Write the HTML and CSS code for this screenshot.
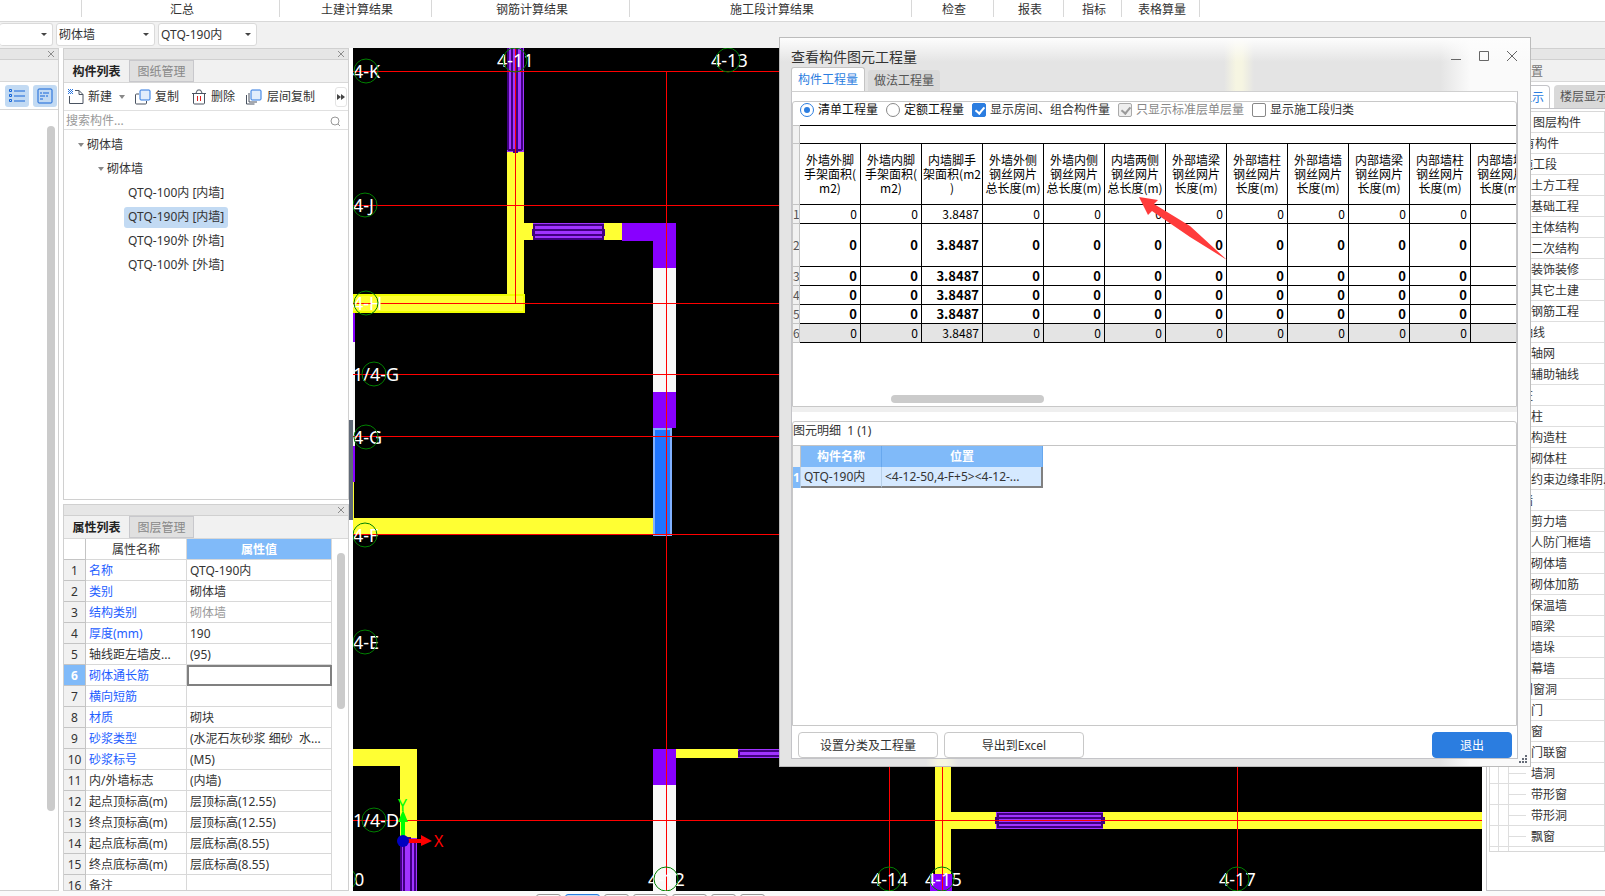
FILE: index.html
```html
<!DOCTYPE html>
<html lang="zh-CN">
<head>
    <meta charset="UTF-8">
    <meta name="viewport" content="width=device-width, initial-scale=1.0">
    <title>查看构件图元工程量</title>
    <link rel="stylesheet" href="styles.css">
</head>
<body>

<nav class="ribbon">
    <span class="group first"></span>
    <span class="group summary">汇总</span>
    <span class="group civil">土建计算结果</span>
    <span class="group rebar">钢筋计算结果</span>
    <span class="group stage">施工段计算结果</span>
    <span class="group check">检查</span>
    <span class="group report">报表</span>
    <span class="group index">指标</span>
    <span class="group takeoff">表格算量</span>
</nav>

<div class="selectbar">
    <div class="combo short"><select aria-label="楼层"><option></option></select></div>
    <div class="combo"><select aria-label="构件类型"><option>砌体墙</option></select></div>
    <div class="combo"><select aria-label="构件"><option>QTQ-190内</option></select></div>
</div>

<main class="workspace">

    <!-- Navigation dock -->
    <aside class="nav-dock">
        <div class="dock-title"><button class="dock-close" aria-label="关闭">
            <svg width="8" height="8" viewBox="0 0 8 8"><path d="M1 1l6 6M7 1l-6 6"/></svg></button></div>
        <div class="nav-blank"></div>
        <div class="nav-tools">
            <button aria-label="列表">
                <svg width="16" height="14" viewBox="0 0 16 14"><path d="M5 2h11M5 7h11M5 12h11"/><path d="M.5 .5h2v2h-2zM.5 5.5h2v2h-2zM.5 10.500h2v2h-2z"/></svg>
            </button>
            <button aria-label="详情">
                <svg width="16" height="16" viewBox="0 0 16 16"><rect x="1" y="1" width="14" height="14" rx="1"/><path d="M3 5h2M6 5h6M3 8h5M9 8h2M3 11h3"/></svg>
            </button>
        </div>
        <div class="nav-body"><div class="scroll-thumb"></div></div>
    </aside>

    <div class="left-docks">
        <!-- Component list -->
        <section class="panel list-panel">
            <div class="dock-title"><button class="dock-close" aria-label="关闭">
                <svg width="8" height="8" viewBox="0 0 8 8"><path d="M1 1l6 6M7 1l-6 6"/></svg></button></div>
            <div class="tabs">
                <button class="tab active">构件列表</button>
                <button class="tab">图纸管理</button>
            </div>
            <div class="tools">
                <button class="tool new">
                    <svg width="16" height="16" viewBox="0 0 16 16"><path class="ink" d="M7 1.500h4l4 4v9H1.500V7M11 1.500v4h4"/><path class="dots" d="M0 0h1v1H0zM2 0h1v1H2zM4 0h1v1H4zM1 1h1v1H1zM3 1h1v1H3zM0 2h1v1H0zM2 2h1v1H2zM4 2h1v1H4zM1 3h1v1H1zM3 3h1v1H3zM0 4h1v1H0zM2 4h1v1H2zM4 4h1v1H4z"/></svg>
                    新建<i class="caret"></i></button>
                <button class="tool copy">
                    <svg width="16" height="16" viewBox="0 0 16 16"><path class="ink" d="M4 5H1.500a1 1 0 0 0-1 1v8a1 1 0 0 0 1 1h9a1 1 0 0 0 1-1v-2"/><rect class="sheet" x="5" y="1" width="10" height="10" rx="1"/></svg>
                    复制</button>
                <button class="tool delete">
                    <svg width="14" height="16" viewBox="0 0 14 16"><path class="ink" d="M0 4.500h14M4 4L5.500 1h3L10 4M1.500 5v9a1 1 0 0 0 1 1h9a1 1 0 0 0 1-1V5"/><path class="warn" d="M5.500 7v5M8.500 7v5"/></svg>
                    删除</button>
                <button class="tool floor">
                    <svg width="16" height="16" viewBox="0 0 16 16"><path class="ink" d="M3 4v9h8M.5 6v9h8"/><rect class="sheet" x="5" y="1" width="10" height="10" rx="1"/></svg>
                    层间复制</button>
                <button class="more" aria-label="更多"><i></i><i></i></button>
            </div>
            <div class="search">
                <input type="text" placeholder="搜索构件..." aria-label="搜索构件">
                <svg width="12" height="12" viewBox="0 0 12 12"><circle cx="5" cy="6" r="4"/><path d="M8 9l2 2"/></svg>
            </div>
            <ul class="tree">
                <li class="lv1"><i class="caret"></i>砌体墙</li>
                <li class="lv2"><i class="caret"></i>砌体墙</li>
                <li class="lv3"><span>QTQ-100内 [内墙]</span></li>
                <li class="lv3"><span class="picked">QTQ-190内 [内墙]</span></li>
                <li class="lv3"><span>QTQ-190外 [外墙]</span></li>
                <li class="lv3"><span>QTQ-100外 [外墙]</span></li>
            </ul>
        </section>

        <!-- Property list -->
        <section class="panel props-panel">
            <div class="dock-title"><button class="dock-close" aria-label="关闭">
                <svg width="8" height="8" viewBox="0 0 8 8"><path d="M1 1l6 6M7 1l-6 6"/></svg></button></div>
            <div class="tabs">
                <button class="tab active">属性列表</button>
                <button class="tab">图层管理</button>
            </div>
            <div class="props-body">
                <table class="props">
                    <tr><th class="num"></th><th class="key">属性名称</th><th class="val-head">属性值</th></tr>
                    <tr><td class="num">1</td><td class="blue">名称</td><td>QTQ-190内</td></tr>
                    <tr><td class="num">2</td><td class="blue">类别</td><td>砌体墙</td></tr>
                    <tr><td class="num">3</td><td class="blue">结构类别</td><td class="gray">砌体墙</td></tr>
                    <tr><td class="num">4</td><td class="blue">厚度(mm)</td><td>190</td></tr>
                    <tr><td class="num">5</td><td>轴线距左墙皮...</td><td>(95)</td></tr>
                    <tr><td class="num current">6</td><td class="blue">砌体通长筋</td><td class="editing"><input type="text" aria-label="砌体通长筋"></td></tr>
                    <tr><td class="num">7</td><td class="blue">横向短筋</td><td></td></tr>
                    <tr><td class="num">8</td><td class="blue">材质</td><td>砌块</td></tr>
                    <tr><td class="num">9</td><td class="blue">砂浆类型</td><td>(水泥石灰砂浆 细砂&nbsp; 水...</td></tr>
                    <tr><td class="num">10</td><td class="blue">砂浆标号</td><td>(M5)</td></tr>
                    <tr><td class="num">11</td><td>内/外墙标志</td><td>(内墙)</td></tr>
                    <tr><td class="num">12</td><td>起点顶标高(m)</td><td>层顶标高(12.55)</td></tr>
                    <tr><td class="num">13</td><td>终点顶标高(m)</td><td>层顶标高(12.55)</td></tr>
                    <tr><td class="num">14</td><td>起点底标高(m)</td><td>层底标高(8.55)</td></tr>
                    <tr><td class="num">15</td><td>终点底标高(m)</td><td>层底标高(8.55)</td></tr>
                    <tr><td class="num">16</td><td>备注</td><td></td></tr>
                </table>
                <div class="scroll-thumb"></div>
            </div>
        </section>
    </div>

    <div class="splitter"><button class="handle" aria-label="收起"></button></div>

    <!-- Drawing area -->
    <div class="canvas">
        <svg viewBox="353 48 1129 843" preserveAspectRatio="xMinYMin slice">
            <!-- edge of the neighbouring rooms -->
            <path class="column" d="M353 296h2v46h-2zM353 446h2v36h-2z"/>
            <path class="shaft" d="M353 342h2v104h-2z"/>
            <!-- walls -->
            <g class="wall">
                <path d="M507 152h17v142h-17z"/>
                <path d="M524 223h98v17h-98z"/>
                <path d="M353 518h300v16H353z"/>
                <path d="M353 482h1v36h-1z"/>
                <path d="M353 749h64v89h-17v-72h-47z"/>
                <path d="M676 749h62v9h-62z"/>
                <path d="M935 760h16v114h-16z"/>
                <path d="M951 812h531v17H951z"/>
                <rect class="wall-edge" x="350" y="295" width="174" height="17"/>
            </g>
            <!-- windows -->
            <g class="window">
                <rect x="507" y="40" width="17" height="112"/>
                <rect x="533" y="223" width="71" height="17"/>
                <rect x="400" y="838" width="17" height="60"/>
                <rect x="738" y="749" width="60" height="9"/>
                <rect x="996" y="812" width="107" height="17"/>
            </g>
            <g class="window-bars">
                <path d="M508 48v102M512 48v102M517 48v102M522 48v102M508 150h14M513 152h5"/>
                <path d="M534 225h69v14h-69zM534 230h69M534 235h69M533 229v7M604 229v7"/>
                <path d="M401 840v52M404 840v52M411 840v52M415 840v52M401 838h10"/>
                <path d="M739 751h50M739 756h50M739 751v6"/>
                <path d="M998 814h104v13H998zM998 818h104M998 823h104M996 817v7M1104 817v7"/>
            </g>
            <!-- columns and shear walls -->
            <g class="column">
                <path d="M622 223h54v45h-23v-27h-31z"/>
                <path d="M653 392h23v36h-23z"/>
                <path d="M653 749h23v36h-23z"/>
                <path d="M930 874h22v17h-22z"/>
            </g>
            <path class="shaft" d="M653 268h23v124h-23zM653 785h23v106h-23z"/>
            <rect class="selected" x="654" y="429" width="17" height="106"/>
            <!-- grid -->
            <path class="grid" d="M353 71.500h1129M353 205.500h1129M353 303.500h1129M353 374.500h1129M353 436.500h1129M353 534.500h1129M353 820.500h1129M515.500 48v255M666.500 71v820M889.500 700v191M942.500 700v191M1237.500 700v191"/>
            <!-- axis bubbles -->
            <g class="labels">
                <text x="353" y="78">4-K</text>
                <text x="353" y="212">4-J</text>
                <text x="353" y="310">4-H</text>
                <text x="353" y="381">1/4-G</text>
                <text x="353" y="444">4-G</text>
                <text x="353" y="542">4-F</text>
                <text x="353" y="649">4-E</text>
                <text x="353" y="827">1/4-D</text>
                <text x="354" y="886">0</text>
                <text x="497" y="67">4-11</text>
                <text x="711" y="67">4-13</text>
                <text x="648" y="886">4-12</text>
                <text x="871" y="886">4-14</text>
                <text x="925" y="886">4-15</text>
                <text x="1219" y="886">4-17</text>
            </g>
            <g class="bubbles">
                <circle cx="366" cy="71" r="12"/>
                <circle cx="365" cy="205" r="12"/>
                <circle cx="366" cy="303" r="12"/>
                <circle cx="374" cy="374" r="12"/>
                <circle cx="366" cy="437" r="12"/>
                <circle cx="365" cy="535" r="12"/>
                <circle cx="365" cy="642" r="12"/>
                <circle cx="374" cy="820" r="12"/>
                <circle cx="344" cy="879" r="12"/>
                <circle cx="515" cy="60" r="12"/>
                <circle cx="728" cy="60" r="12"/>
                <circle cx="666" cy="879" r="12"/>
                <circle cx="889" cy="879" r="12"/>
                <circle cx="942" cy="879" r="12"/>
                <circle cx="1237" cy="879" r="12"/>
            </g>
            <!-- coordinate marker -->
            <path class="axis-y" d="M401 838v-16h-3l5-12 5 12h-3v16z"/>
            <path class="axis-x" d="M408 839h13v-4l11 6-11 5v-3h-13z"/>
            <circle class="origin" cx="403" cy="841" r="6"/>
            <text class="y-name" x="398" y="811">Y</text>
            <text class="x-name" x="434" y="847">X</text>
        </svg>
    </div>

    <!-- Display settings dock -->
    <aside class="display-dock">
        <div class="dock-title"></div>
        <div class="display-name">显示设置</div>
        <div class="display-tabs">
            <button class="active">图元显示</button>
            <button>楼层显示</button>
        </div>
        <ul class="layers">
            <li class="head">图层构件</li>
            <li class="l0">所有构件</li>
            <li class="l1">施工段</li>
            <li>土方工程</li>
            <li>基础工程</li>
            <li>主体结构</li>
            <li>二次结构</li>
            <li>装饰装修</li>
            <li>其它土建</li>
            <li>钢筋工程</li>
            <li class="l1">轴线</li>
            <li>轴网</li>
            <li>辅助轴线</li>
            <li class="l1">柱</li>
            <li>柱</li>
            <li>构造柱</li>
            <li>砌体柱</li>
            <li>约束边缘非阴...</li>
            <li class="l1">墙</li>
            <li>剪力墙</li>
            <li>人防门框墙</li>
            <li>砌体墙</li>
            <li>砌体加筋</li>
            <li>保温墙</li>
            <li>暗梁</li>
            <li>墙垛</li>
            <li>幕墙</li>
            <li class="l1">门窗洞</li>
            <li>门</li>
            <li>窗</li>
            <li>门联窗</li>
            <li>墙洞</li>
            <li>带形窗</li>
            <li>带形洞</li>
            <li>飘窗</li>
        </ul>
    </aside>
</main>

<footer class="statusbar">
    <button aria-label="捕捉"></button>
    <button class="wide on" aria-label="正交"></button>
    <button aria-label="交点"></button>
    <button class="wide" aria-label="垂点"></button>
    <button class="wide" aria-label="中点"></button>
    <button aria-label="顶点"></button>
    <button aria-label="坐标"></button>
</footer>

<!-- Quantity dialog -->
<div class="dialog" role="dialog" aria-labelledby="dialogTitle">
    <header class="dialog-head">
        <h1 id="dialogTitle">查看构件图元工程量</h1>
        <div class="win-buttons">
            <button aria-label="最小化"><svg width="12" height="12" viewBox="0 0 12 12"><path d="M1 9.500h10"/></svg></button>
            <button aria-label="最大化"><svg width="12" height="12" viewBox="0 0 12 12"><path d="M1.500 1.500h9v9h-9z"/></svg></button>
            <button aria-label="关闭"><svg width="12" height="12" viewBox="0 0 12 12"><path d="M1 1l10 10M11 1L1 11"/></svg></button>
        </div>
    </header>
    <div class="dialog-tabs">
        <button class="active">构件工程量</button>
        <button>做法工程量</button>
    </div>
    <div class="dialog-page">
        <section class="quantities">
            <div class="options">
                <label><input type="radio" name="mode" checked>清单工程量</label>
                <label><input type="radio" name="mode">定额工程量</label>
                <label class="dim-text"><input type="checkbox" checked>显示房间、组合构件量</label>
                <label class="disabled"><input type="checkbox" checked disabled>只显示标准层单层量</label>
                <label class="dim-text"><input type="checkbox">显示施工段归类</label>
            </div>
            <div class="table-view">
                <table class="qty">
                    <colgroup><col class="no-col"><col span="12"></colgroup>
                    <tr class="band"><th class="no"></th><th colspan="12"></th></tr>
                    <tr class="names"><th class="no"></th><th>外墙外脚<br>手架面积(<br>m2)</th><th>外墙内脚<br>手架面积(<br>m2)</th><th>内墙脚手<br>架面积(m2<br>)</th><th>外墙外侧<br>钢丝网片<br>总长度(m)</th><th>外墙内侧<br>钢丝网片<br>总长度(m)</th><th>内墙两侧<br>钢丝网片<br>总长度(m)</th><th>外部墙梁<br>钢丝网片<br>长度(m)</th><th>外部墙柱<br>钢丝网片<br>长度(m)</th><th>外部墙墙<br>钢丝网片<br>长度(m)</th><th>内部墙梁<br>钢丝网片<br>长度(m)</th><th>内部墙柱<br>钢丝网片<br>长度(m)</th><th>内部墙墙<br>钢丝网片<br>长度(m)</th></tr>
                    <tr><td class="no">1</td><td>0</td><td>0</td><td>3.8487</td><td>0</td><td>0</td><td>0</td><td>0</td><td>0</td><td>0</td><td>0</td><td>0</td><td></td></tr>
                    <tr class="sum tall"><td class="no">2</td><td>0</td><td>0</td><td>3.8487</td><td>0</td><td>0</td><td>0</td><td>0</td><td>0</td><td>0</td><td>0</td><td>0</td><td></td></tr>
                    <tr class="sum"><td class="no">3</td><td>0</td><td>0</td><td>3.8487</td><td>0</td><td>0</td><td>0</td><td>0</td><td>0</td><td>0</td><td>0</td><td>0</td><td></td></tr>
                    <tr class="sum"><td class="no">4</td><td>0</td><td>0</td><td>3.8487</td><td>0</td><td>0</td><td>0</td><td>0</td><td>0</td><td>0</td><td>0</td><td>0</td><td></td></tr>
                    <tr class="sum"><td class="no">5</td><td>0</td><td>0</td><td>3.8487</td><td>0</td><td>0</td><td>0</td><td>0</td><td>0</td><td>0</td><td>0</td><td>0</td><td></td></tr>
                    <tr class="total"><td class="no">6</td><td>0</td><td>0</td><td>3.8487</td><td>0</td><td>0</td><td>0</td><td>0</td><td>0</td><td>0</td><td>0</td><td>0</td><td></td></tr>
                </table>
            </div>
            <div class="scroll-thumb"></div>
        </section>
        <div class="split-line"></div>
        <section class="details">
            <h2>图元明细&nbsp; 1 (1)</h2>
            <div class="detail-view">
                <table class="detail">
                    <tr><th class="no"></th><th class="name">构件名称</th><th class="place">位置</th></tr>
                    <tr><td class="no">1</td><td>QTQ-190内</td><td>&lt;4-12-50,4-F+5&gt;&lt;4-12-...</td></tr>
                </table>
            </div>
        </section>
        <div class="actions">
            <button>设置分类及工程量</button>
            <button>导出到Excel</button>
            <button class="primary">退出</button>
        </div>
    </div>
    <svg class="grip" width="9" height="9" viewBox="0 0 9 9"><path d="M6 0h2v2H6zM3 3h2v2H3zM6 3h2v2H6zM0 6h2v2H0zM3 6h2v2H3zM6 6h2v2H6z"/></svg>
    <svg class="pointer" width="88" height="64" viewBox="0 0 88 64"><path d="M0 0l19 3-4 4 36 22 37 34-37-23-38-26-4 4z"/></svg>
</div>

</body>
</html>
```

FILE: styles.css
```css
/* Global styles */

* {
  box-sizing: border-box;
  margin: 0;
  padding: 0;
}

body {
  display: flex;
  flex-direction: column;
  height: 100vh;
  overflow: hidden;
  font-family: "Noto Sans", "Noto Sans CJK SC", sans-serif;
  font-size: 12px;
  line-height: 16px;
  color: #333;
  background-color: #fafafa;
}

button, input, select {
  font: inherit;
  color: inherit;
  background: none;
  border: none;
}

svg {
  flex: none;
  fill: none;
}

ul {
  list-style: none;
}

table {
  border-collapse: separate;
  border-spacing: 0;
  table-layout: fixed;
}

.scroll-thumb {
  background-color: #cbcbcb;
  border-radius: 4px;
}

.caret {
  border: 3px solid transparent;
  border-top: 4px solid #888;
  border-bottom: none;
}

/* Ribbon */

.ribbon {
  display: flex;
  flex: none;
  height: 22px;
  background-color: #fff;
  border-bottom: 1px solid #d8d8d8;
}

.group {
  height: 17px;
  padding: 2px 0 0 3px;
  line-height: 15px;
  text-align: center;
  border-right: 1px solid #d8d8d8;
}

.first { width: 82px; }
.summary, .rebar { width: 198px; }
.civil { width: 152px; }
.stage { width: 282px; }
.check { width: 82px; }
.report { width: 70px; }
.index { width: 58px; }
.takeoff { width: 78px; }

/* Selector row */

.selectbar {
  display: flex;
  flex: none;
  gap: 3px;
  height: 26px;
  padding: 1px 0 2px;
  background-color: #f1f1f1;
}

.combo {
  position: relative;
  width: 99px;
  background-color: #fff;
  border: 1px solid #dadada;
  border-radius: 3px;
}

.combo.short {
  width: 53px;
  border-left: none;
}

.combo::after {
  content: "";
  position: absolute;
  top: 9px;
  right: 5px;
  border: 3px solid transparent;
  border-top: 3px solid #444;
  border-bottom: none;
}

.combo select {
  width: 100%;
  height: 21px;
  padding-left: 2px;
  appearance: none;
}

/* Workspace */

.workspace {
  display: flex;
  flex: 1;
  min-height: 0;
  background-color: #fff;
}

.dock-title {
  display: flex;
  flex: none;
  justify-content: flex-end;
  height: 12px;
  padding-right: 3px;
  background-color: #e6e6e6;
  border-top: 1px solid #d0d0d0;
  border-bottom: 1px solid #d0d0d0;
}

.dock-close {
  display: flex;
  align-items: center;
  padding: 0;
}

.dock-close svg {
  stroke: #8c8c8c;
}

.nav-dock {
  display: flex;
  flex-direction: column;
  width: 59px;
  border-right: 1px solid #d0d0d0;
  border-bottom: 1px solid #d0d0d0;
}

.nav-blank {
  height: 22px;
  background-color: #f1f1f1;
  border-bottom: 1px solid #d8d8d8;
}

.nav-tools {
  display: flex;
  gap: 4px;
  padding: 3px 1px 2px 5px;
  border-bottom: 1px solid #d8d8d8;
}

.nav-tools button {
  display: flex;
  align-items: center;
  justify-content: center;
  width: 24px;
  height: 22px;
  background-color: #c2daf3;
  border-radius: 3px;
}

.nav-tools svg {
  stroke: #1565d8;
}

.nav-body {
  display: flex;
  flex: 1;
  justify-content: flex-end;
  padding: 16px 3px 79px 0;
}

.nav-body .scroll-thumb {
  width: 8px;
}

.left-docks {
  display: flex;
  flex-direction: column;
  gap: 4px;
  width: 286px;
  margin-left: 4px;
}

.panel {
  display: flex;
  flex-direction: column;
  overflow: hidden;
  border: 1px solid #d0d0d0;
  border-top: none;
}

.list-panel {
  height: 452px;
}

.props-panel {
  flex: 1;
}

.tabs {
  display: flex;
  flex: none;
  height: 23px;
  background-color: #f1f1f1;
  border-bottom: 1px solid #d8d8d8;
}

.tab {
  width: 65px;
  padding-top: 2px;
  color: #888;
  background-color: #e0e0e0;
  border: 1px solid #c8c8cc;
}

.tab.active {
  color: #222;
  font-weight: bold;
  background-color: #f1f1f1;
  border-color: #f1f1f1;
}

.tools {
  display: flex;
  flex: none;
  align-items: center;
  height: 28px;
  padding-left: 4px;
  border-bottom: 1px solid #e0e0e0;
}

.tool {
  display: flex;
  gap: 4px;
  align-items: center;
  line-height: 18px;
  white-space: nowrap;
}

.tool .caret {
  margin-left: 3px;
}

.copy {
  margin-left: 10px;
}

.delete {
  gap: 5px;
  margin-left: 13px;
}

.floor {
  gap: 5px;
  margin-left: 11px;
}

.ink {
  stroke: #4a5361;
}

.dots {
  fill: #2a76e0;
}

.sheet {
  fill: #e2edfc;
  stroke: #2a76e0;
}

.warn {
  stroke: #e02020;
}

.more {
  display: flex;
  align-items: center;
  justify-content: center;
  width: 12px;
  height: 20px;
  margin: 0 1px 0 auto;
  border: 1px solid #e4e4e4;
  border-radius: 3px;
}

.more i {
  border: 3px solid transparent;
  border-left: 4px solid #444;
  border-right: none;
}

.search {
  display: flex;
  flex: none;
  align-items: center;
  height: 19px;
  padding: 1px 6px 0 2px;
  border-bottom: 1px solid #e0e0e0;
}

.search input {
  flex: 1;
  min-width: 0;
}

.search input::placeholder {
  color: #999;
}

.search svg {
  stroke: #999;
}

.tree {
  padding-top: 3px;
}

.tree li {
  display: flex;
  gap: 3px;
  align-items: center;
  height: 24px;
}

.lv1 { padding-left: 14px; }
.lv2 { padding-left: 34px; }
.lv3 { padding-left: 60px; }

.tree span {
  padding: 2px 4px 3px;
  border-radius: 3px;
}

.tree .picked {
  background-color: #c2daf3;
}

/* Property grid */

.props-body {
  display: flex;
  min-height: 0;
}

.props {
  width: 268px;
}

.props th, .props td {
  height: 21px;
  padding: 1px 3px 0;
  overflow: hidden;
  font-weight: normal;
  line-height: 19px;
  text-align: left;
  white-space: nowrap;
  border-right: 1px solid #d8d8d8;
  border-bottom: 1px solid #d8d8d8;
}

.props .num {
  width: 22px;
  padding: 1px 0 0;
  text-align: center;
  background-color: #f1f1f1;
  border-color: #c4c4c4;
}

.props th.num {
  background-color: #fff;
}

.props .key {
  width: 101px;
  text-align: center;
}

.props .val-head {
  font-weight: bold;
  color: #fff;
  text-align: center;
  background-color: #80baf9;
}

.props .current {
  font-weight: bold;
  color: #fff;
  background-color: #80baf9;
}

.blue { color: #1e5eff; }
.gray { color: #999; }

.props .editing {
  padding: 0;
  border: 2px solid #808080;
}

.editing input {
  display: block;
  width: 100%;
  height: 17px;
}

.props-body .scroll-thumb {
  width: 8px;
  height: 156px;
  margin: 14px 0 0 5px;
}

/* Splitter */

.splitter {
  width: 4px;
  padding-top: 372px;
}

.handle {
  display: block;
  width: 4px;
  height: 100px;
  background-color: #616b78;
}

/* Drawing */

.canvas {
  flex: 1;
  min-width: 0;
  overflow: hidden;
  background-color: #000;
}

.canvas svg {
  display: block;
  width: 100%;
  height: 100%;
}

.wall { fill: #ffff33; }
.wall-edge { stroke: #f0ff00; stroke-width: 2; }
.window { fill: #a033ff; }
.window-bars { stroke: #400080; stroke-width: 2; }
.column { fill: #8800ff; }
.shaft { fill: #f8f8f8; }
.selected { fill: #1f75ff; stroke: #80b0ff; stroke-width: 2; }
.grid { stroke: #f00; }
.bubbles { stroke: #008000; }
.axis-y { fill: #0f0; }
.axis-x { fill: #f00; }
.origin { fill: #0000c0; }

.labels {
  font-size: 18px;
  fill: #fff;
}

.y-name { font-size: 16px; fill: #0f0; }
.x-name { font-size: 16px; fill: #f00; }

/* Display dock */

.display-dock {
  width: 119px;
  margin-left: 4px;
  overflow: hidden;
  white-space: nowrap;
  border-left: 1px solid #c4c4c8;
  border-bottom: 1px solid #c4c4c8;
}

.display-name {
  height: 22px;
  padding: 4px 0 0 8px;
  color: #777;
  background-color: #f1f1f1;
  border-bottom: 1px solid #d8d8d8;
}

.display-tabs {
  display: flex;
  gap: 4px;
  height: 27px;
  padding-top: 3px;
  border-bottom: 1px solid #c4c4c8;
}

.display-tabs button {
  flex: none;
  width: 63px;
  padding: 1px 0 0 6px;
  color: #555;
  text-align: left;
  background-color: #d9d9d9;
  border-radius: 4px 4px 0 0;
}

.display-tabs .active {
  padding-left: 8px;
  color: #2b7de0;
  background-color: #fff;
  border: 1px solid #c4c4c8;
  border-bottom: none;
}

.layers {
  margin: 2px 0 0 2px;
  padding-bottom: 4px;
  border: 1px solid #d8d8d8;
  background-image: linear-gradient(to right, transparent 8px, #dedede 8px, #dedede 9px, transparent 9px, transparent 18px, #dedede 18px, #dedede 19px, transparent 19px);
}

.layers li {
  height: 21px;
  padding-left: 41px;
  line-height: 21px;
  border-bottom: 1px solid #dedede;
}

.layers li::before {
  content: "";
  float: left;
  width: 17px;
  height: 10px;
  margin-left: -22px;
  border-bottom: 1px solid #dedede;
}

.layers .head { padding-left: 43px; }
.layers .l0 { padding-left: 21px; }
.layers .l1 { padding-left: 31px; }

/* Status bar */

.statusbar {
  display: flex;
  flex: none;
  gap: 4px;
  height: 5px;
  padding: 3px 0 0 536px;
  overflow: hidden;
}

.statusbar button {
  width: 25px;
  height: 20px;
  border: 1px solid #999;
  border-radius: 3px;
}

.statusbar .wide { width: 35px; }

.statusbar .on {
  background-color: #c2daf3;
  border-color: #2b7de0;
}

/* Dialog */

.dialog {
  position: absolute;
  top: 37px;
  left: 779px;
  display: flex;
  flex-direction: column;
  width: 752px;
  height: 730px;
  padding: 0 12px 7px 11px;
  background-color: #e4e4e4;
  background-image:
    linear-gradient(to bottom, #fdfdfd, rgba(253, 253, 253, 0) 24px),
    linear-gradient(to right, transparent 660px, #fafafa 690px),
    linear-gradient(to right, transparent 444px, #f6f5e2 456px, #f6f5e2 462px, transparent 474px),
    linear-gradient(to right, transparent 146px, #f6f5e2 158px, #f6f5e2 166px, transparent 178px);
  background-position: 0 0, 0 0, 0 0, 0 100%;
  background-size: 100% 100%, 100% 100%, 100% 60px, 100% 8px;
  background-repeat: no-repeat;
  border: 1px solid #bcbcbc;
}

.dialog-head {
  display: flex;
  flex: none;
  justify-content: space-between;
  height: 29px;
  padding-top: 9px;
}

.dialog-head h1 {
  font-size: 14px;
  font-weight: normal;
  line-height: 20px;
}

.win-buttons {
  display: flex;
  gap: 16px;
  padding-top: 3px;
}

.win-buttons button {
  display: flex;
  width: 12px;
  height: 12px;
}

.win-buttons svg {
  stroke: #666;
}

.dialog-tabs {
  display: flex;
  flex: none;
  gap: 3px;
  align-items: flex-end;
  height: 24px;
}

.dialog-tabs button {
  width: 72px;
  height: 21px;
  color: #555;
  background-color: #dadada;
  border-radius: 3px 3px 0 0;
}

.dialog-tabs .active {
  width: 74px;
  height: 24px;
  color: #2b7de0;
  background-color: #fff;
  border: 1px solid #c4c4c4;
  border-bottom: none;
}

.dialog-page {
  display: flex;
  flex: 1;
  flex-direction: column;
  min-height: 0;
  padding-top: 9px;
  background-color: #fff;
  border: 1px solid #c4c4c8;
  border-top-color: #d0d0d0;
}

.quantities {
  height: 306px;
  border: 1px solid #c8c8c8;
  border-radius: 3px 3px 0 0;
}

.options {
  display: flex;
  gap: 8px;
  height: 23px;
  padding-left: 7px;
}

.options label {
  display: flex;
  gap: 4px;
  align-items: center;
  height: 16px;
  color: #111;
}

.options .dim-text { color: #333; }
.options .disabled { color: #888; }

.options input {
  position: relative;
  width: 14px;
  height: 14px;
  appearance: none;
  background-color: #fff;
  border: 1px solid #888;
}

.options input[type="radio"] {
  border-radius: 50%;
}

.options input[type="radio"]:checked {
  border-color: #2b7de0;
}

.options input[type="radio"]:checked::after {
  content: "";
  position: absolute;
  top: 3px;
  left: 3px;
  width: 6px;
  height: 6px;
  background-color: #2b7de0;
  border-radius: 50%;
}

.options input[type="checkbox"] {
  border-radius: 2px;
}

.options input[type="checkbox"]:checked {
  background-color: #2b7de0;
  border-color: #2b7de0;
}

.options input[type="checkbox"]:checked::after {
  content: "";
  position: absolute;
  top: 1px;
  left: 4px;
  width: 4px;
  height: 7px;
  border: solid #fff;
  border-width: 0 2px 2px 0;
  transform: rotate(40deg);
}

.options input[type="checkbox"]:disabled {
  background-color: #eee;
  border-color: #aaa;
}

.options input[type="checkbox"]:disabled::after {
  border-color: #999;
}

.table-view {
  overflow: hidden;
}

/* Quantity table */

.qty {
  width: 739px;
  font-family: "Noto Sans CJK SC", sans-serif;
  color: #000;
}

.qty col { width: 61px; }
.qty .no-col { width: 7px; }

.qty th, .qty td {
  height: 19px;
  padding: 0 3px;
  line-height: 14px;
  text-align: right;
  border-right: 1px solid #000;
  border-bottom: 1px solid #000;
}

.qty th {
  padding: 0;
  font-weight: normal;
  text-align: center;
  white-space: nowrap;
}

.qty .band th {
  height: 19px;
  border-top: 1px solid #000;
}

.qty .names th { height: 61px; }
.qty .tall td { height: 43px; }
.qty .sum td { font-weight: bold; font-size: 13px; }
.qty .total td { background-color: #e4e4e4; }

.qty tr .no {
  padding: 0;
  overflow: hidden;
  font-size: 12px;
  font-weight: normal;
  color: #555;
  text-align: left;
  background-color: #f1f1f1;
  border-color: #c4c4c4;
}

.quantities .scroll-thumb {
  width: 153px;
  height: 8px;
  margin: 52px 0 0 98px;
}

.split-line {
  height: 5px;
  background-color: #efefef;
}

/* Element details */

.details {
  display: flex;
  flex: 1;
  flex-direction: column;
  margin-top: 9px;
  border: 1px solid #c8c8c8;
  border-radius: 3px 3px 0 0;
}

.details h2 {
  height: 23px;
  font-size: 12px;
  font-weight: normal;
  line-height: 18px;
}

.detail-view {
  flex: 1;
  border-top: 1px solid #c4c4c4;
}

.detail {
  width: 250px;
}

.detail th, .detail td {
  height: 21px;
  padding: 0 3px;
  line-height: 19px;
  text-align: left;
  white-space: nowrap;
  border-right: 1px solid #b8d0e8;
}

.detail th {
  color: #fff;
  text-align: center;
  background-color: #80baf9;
  border-color: #68a8ee;
}

.detail td {
  background-color: #d5e9ff;
  border-bottom: 2px solid #808080;
}

.detail td:last-child {
  border-right: 2px solid #808080;
}

.detail .name { width: 81px; }
.detail .place { width: 161px; }

.detail .no {
  width: 8px;
  padding: 0;
  font-weight: bold;
  color: #fff;
  background-color: #80baf9;
  border-bottom: none;
}

.detail th.no {
  background-color: #f1f1f1;
  border-color: #c4c4c4;
}

.actions {
  display: flex;
  gap: 6px;
  height: 32px;
  padding: 6px 5px 0 6px;
}

.actions button {
  width: 140px;
  height: 26px;
  padding-top: 2px;
  border: 1px solid #c8c8c8;
  border-radius: 4px;
}

.actions .primary {
  width: 80px;
  margin-left: auto;
  color: #fff;
  background-color: #2b7de0;
  border-color: #2b7de0;
}

.grip {
  position: absolute;
  right: 2px;
  bottom: 2px;
  fill: #666c78;
}

.pointer {
  position: absolute;
  top: 159px;
  left: 359px;
  fill: #ff3b3b;
}
```
